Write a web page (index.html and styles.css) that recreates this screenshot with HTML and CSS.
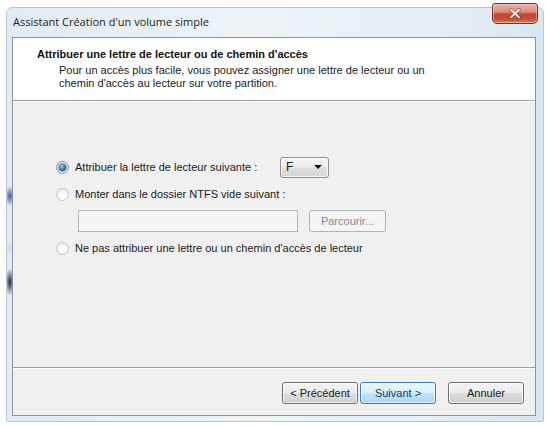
FILE: index.html
```html
<!DOCTYPE html>
<html lang="fr">
<head>
<meta charset="utf-8">
<title>Assistant Création d'un volume simple</title>
<link rel="stylesheet" href="styles.css">
</head>
<body>
<div class="window">
  <div class="titlebar">
    <span class="wtitle">Assistant Création d'un volume simple</span>
    <button class="close" aria-label="Fermer">
      <svg width="14" height="11" viewBox="0 0 14 11">
        <path d="M3 1.8 L11 9.2 M11 1.8 L3 9.2" stroke="#5a1a10" stroke-width="3.6" stroke-linecap="round" opacity="0.5"/>
        <path d="M3 1.8 L11 9.2 M11 1.8 L3 9.2" stroke="#f8ece8" stroke-width="2.2" stroke-linecap="round"/>
      </svg>
    </button>
  </div>
  <div class="client">
    <div class="header">
      <div class="htitle">Attribuer une lettre de lecteur ou de chemin d'accès</div>
      <div class="hsub">Pour un accès plus facile, vous pouvez assigner une lettre de lecteur ou un<br>chemin d'accès au lecteur sur votre partition.</div>
    </div>
    <div class="body">
      <div class="row row1">
        <span class="radio checked"><span class="dot"></span></span>
        <span class="label fixed">Attribuer la lettre de lecteur suivante :</span>
        <div class="combo"><span>F</span><span class="tri"></span></div>
      </div>
      <div class="row row2">
        <span class="radio"></span>
        <span class="label">Monter dans le dossier NTFS vide suivant :</span>
      </div>
      <div class="fieldrow">
        <div class="field"></div>
        <div class="btn disabled">Parcourir...</div>
      </div>
      <div class="row row4">
        <span class="radio"></span>
        <span class="label">Ne pas attribuer une lettre ou un chemin d'accès de lecteur</span>
      </div>
    </div>
    <div class="footer">
      <div class="btn">&lt; Précédent</div>
      <div class="btn default">Suivant &gt;</div>
      <div class="btn cancel">Annuler</div>
    </div>
  </div>
</div>
</body>
</html>
```

FILE: styles.css
```css
* { box-sizing: border-box; }
html, body { margin: 0; padding: 0; background: #ffffff; }
body { width: 545px; height: 426px; overflow: hidden; }

.window {
  margin: 7px 1px 0 6px;
  width: 538px;
  height: 415px;
  border-radius: 6px 6px 2px 2px;
  border: 1px solid #b9c7d2;
  padding: 0 7px 5px 5px;
  display: flex;
  flex-direction: column;
  background:
    radial-gradient(ellipse 5px 10px at 3px 188px, rgba(40,70,170,0.9), rgba(40,70,170,0) ),
    radial-gradient(ellipse 5px 14px at 3px 274px, rgba(20,35,60,0.95), rgba(20,35,60,0) ),
    radial-gradient(ellipse 3px 8px at 3px 240px, rgba(200,215,225,0.9), rgba(200,215,225,0) ),
    linear-gradient(90deg, #e2ebf2 0%, #edf3f7 45%, #e6eef4 80%, #d8e6ef 100%);
}

.titlebar {
  height: 29px;
  display: flex;
  align-items: flex-start;
  justify-content: space-between;
  flex: none;
}
.wtitle {
  font-family: "Open Sans", "Liberation Sans", sans-serif;
  font-size: 11px;
  color: #1c1c1c;
  padding: 6px 0 0 1px;
}
.close {
  width: 46px;
  height: 21px;
  margin: -5px -2px 0 0;
  padding: 0;
  border: 1px solid #7e2e22;
  border-radius: 3px 3px 5px 5px;
  background: linear-gradient(180deg, #eab3a6 0%, #de8f7e 40%, #c4452c 55%, #c9553a 85%, #de8e72 100%);
  display: flex;
  align-items: center;
  justify-content: center;
  box-shadow: inset 0 0 0 1px rgba(255,220,210,0.45);
}

.client {
  flex: 1;
  border: 1px solid #8b949c;
  background: #f0f0f0;
  display: flex;
  flex-direction: column;
  font-family: "Liberation Sans", Arial, sans-serif;
  font-size: 11px;
  color: #1a1a1a;
}

.header {
  height: 63px;
  background: #ffffff;
  border-bottom: 1px solid #a0a0a0;
  box-shadow: 0 1px 0 #ffffff;
  padding: 10px 0 0 24px;
  flex: none;
}
.htitle {
  font-weight: bold;
  font-size: 11px;
  line-height: 13px;
  color: #111;
}
.hsub {
  margin-top: 3px;
  padding-left: 22px;
  line-height: 13px;
  color: #1a1a1a;
}

.body {
  flex: 1;
  padding: 55px 0 0 43px;
  display: flex;
  flex-direction: column;
}
.row {
  display: flex;
  align-items: center;
}
.row1 { height: 22px; }
.row2 { height: 16px; margin-top: 8px; }
.row4 { height: 16px; margin-top: 8px; }
.label { margin-left: 6px; white-space: nowrap; }
.label.fixed { width: 205px; }

.radio {
  width: 13px;
  height: 13px;
  border-radius: 50%;
  border: 1px solid #c2c6c9;
  background: radial-gradient(circle at 50% 65%, #ffffff 0%, #f2f2f2 60%, #dcdcdc 100%);
  display: flex;
  align-items: center;
  justify-content: center;
  flex: none;
}
.radio.checked {
  border-color: #8a9096;
  background: radial-gradient(circle at 50% 60%, #f8f8f8 0%, #e6e6e6 70%, #cfcfcf 100%);
}
.dot {
  width: 7px;
  height: 7px;
  border-radius: 50%;
  background: radial-gradient(circle at 40% 35%, #8fd0f4 0%, #2a78b4 55%, #143e66 100%);
  box-shadow: 0 0 0 0.5px #2c4a66;
}

.combo {
  width: 49px;
  height: 21px;
  border: 1px solid #8f8f8f;
  border-radius: 3px;
  background: linear-gradient(180deg, #f4f4f4 0%, #ececec 48%, #dfdfdf 52%, #d6d6d6 100%);
  box-shadow: inset 0 0 0 1px rgba(255,255,255,0.7);
  display: flex;
  align-items: center;
  justify-content: space-between;
  padding: 0 6px 0 5px;
  font-size: 12px;
  color: #222;
}
.tri {
  width: 0;
  height: 0;
  border-left: 4px solid transparent;
  border-right: 4px solid transparent;
  border-top: 4px solid #111;
}

.fieldrow {
  display: flex;
  align-items: center;
  margin: 8px 0 0 22px;
  gap: 11px;
  height: 22px;
}
.field {
  width: 220px;
  height: 22px;
  border: 1px solid #b3b7ba;
  background: #f5f5f5;
}

.btn {
  width: 76px;
  height: 22px;
  border: 1px solid #707070;
  border-radius: 3px;
  background: linear-gradient(180deg, #f4f4f4 0%, #ebebeb 48%, #dddddd 52%, #cfcfcf 100%);
  box-shadow: inset 0 0 0 1px rgba(255,255,255,0.75);
  display: flex;
  align-items: center;
  justify-content: center;
  color: #1a1a1a;
  white-space: nowrap;
}
.btn.disabled {
  width: 77px;
  border-color: #b0b4b7;
  background: #f4f4f4;
  color: #8a8a8a;
  box-shadow: none;
}
.btn.default {
  border-color: #3c7fb1;
  background: linear-gradient(180deg, #eaf6fd 0%, #d9f0fc 48%, #bee6fd 52%, #a7d9f5 100%);
  box-shadow: inset 0 0 0 1px rgba(255,255,255,0.6);
  color: #1a3a5a;
}

.footer {
  height: 48px;
  flex: none;
  border-top: 1px solid #a0a0a0;
  box-shadow: inset 0 1px 0 #ffffff;
  display: flex;
  justify-content: flex-end;
  align-items: flex-start;
  padding: 14px 11px 0 0;
  gap: 2px;
}
.btn.cancel { margin-left: 10px; }
```
